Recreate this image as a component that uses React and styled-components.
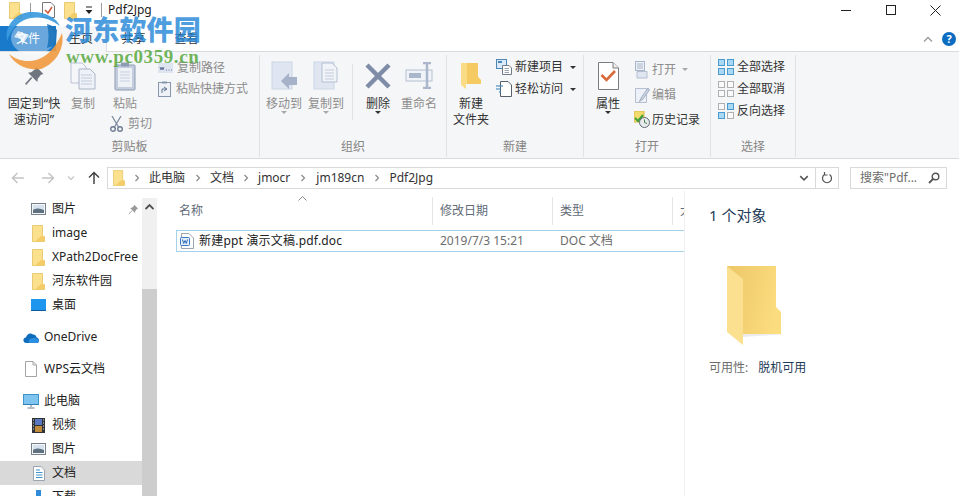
import styled, { createGlobalStyle } from "styled-components";

const GlobalStyle = createGlobalStyle`
  html, body {
    margin: 0;
    padding: 0;
    background: #fff;
  }
  * {
    box-sizing: border-box;
  }
`;

const Page = styled.div`
  position: relative;
  display: flex;
  flex-direction: column;
  width: 959px;
  height: 496px;
  overflow: hidden;
  background: #fff;
  color: #333;
  font-family: "Noto Sans", "Noto Sans CJK SC", sans-serif;
  font-size: 12px;
  line-height: 16px;
  svg {
    display: block;
    flex: none;
  }
`;

const TitleBar = styled.header`
  display: flex;
  align-items: center;
  height: 26px;
  padding: 0 0 6px 9px;
`;
const TitleIcons = styled.div`
  display: flex;
  align-items: center;
  width: 99px;
  height: 20px;
`;
const QuickSep = styled.span`
  width: 1px;
  height: 14px;
  background: #9a9a9a;
  margin: ${(p) => p.$m};
`;
const QuickGap = styled.span`
  width: ${(p) => p.$w}px;
`;
const TitleText = styled.span`
  flex: 1;
  color: #222;
`;
const WinButtons = styled.div`
  display: flex;
  width: 136px;
`;
const WinButton = styled.div`
  display: flex;
  align-items: center;
  justify-content: center;
  width: 45px;
  height: 20px;
`;

const TabRow = styled.nav`
  display: flex;
  align-items: stretch;
  height: 26px;
  border-bottom: 1px solid #dadbdc;
`;
const FileTab = styled.div`
  display: flex;
  align-items: center;
  justify-content: center;
  width: 56px;
  height: 25px;
  background: #1979ca;
  color: #fff;
`;
const Tab = styled.div`
  display: flex;
  align-items: center;
  justify-content: center;
  width: ${(p) => p.$w}px;
  height: ${(p) => (p.$active ? 26 : 25)}px;
  color: #333;
  background: ${(p) => (p.$active ? "#f5f6f7" : "#fff")};
  border-right: ${(p) => (p.$active ? "1px solid #dadbdc" : "0")};
`;
const TabEnd = styled.div`
  display: flex;
  align-items: center;
  justify-content: flex-end;
  gap: 9px;
  flex: 1;
  padding-right: 3px;
`;
const HelpDot = styled.span`
  display: flex;
  align-items: center;
  justify-content: center;
  width: 14px;
  height: 14px;
  border-radius: 50%;
  background: #0b6cc2;
  color: #fff;
  font-size: 11px;
  font-weight: 700;
`;

const Ribbon = styled.section`
  display: flex;
  height: 107px;
  background: #f5f6f7;
  border-bottom: 1px solid #dadbdc;
  padding-top: 3px;
`;
const Group = styled.div`
  display: flex;
  flex-direction: column;
  width: ${(p) => p.$w}px;
  margin-bottom: 1px;
  border-right: 1px solid #e1e2e3;
`;
const GroupBody = styled.div`
  display: flex;
  flex: 1;
  padding-left: ${(p) => p.$pl || 0}px;
`;
const GroupLabel = styled.div`
  height: 20px;
  line-height: 20px;
  text-align: center;
  color: #858585;
`;
const BigButton = styled.div`
  display: flex;
  flex-direction: column;
  align-items: center;
  width: ${(p) => p.$w}px;
  color: ${(p) => (p.$off ? "#8d8d8d" : "#333")};
  text-align: center;
`;
const BigIcon = styled.div`
  display: flex;
  align-items: center;
  justify-content: center;
  height: 41px;
  padding-top: ${(p) => p.$pt || 0}px;
`;
const DropMark = styled.span`
  width: 0;
  height: 0;
  margin-top: -1px;
  border: 3px solid transparent;
  border-bottom-width: 0;
  border-top: 3px solid ${(p) => (p.$off ? "#a8a8a8" : "#333")};
`;
const SmallColumn = styled.div`
  display: flex;
  flex-direction: column;
  margin-top: ${(p) => p.$mt || 0}px;
  margin-left: ${(p) => p.$ml || 0}px;
`;
const SmallRow = styled.div`
  display: flex;
  align-items: center;
  gap: ${(p) => p.$gap ?? 3}px;
  height: ${(p) => p.$h}px;
  color: ${(p) => (p.$off ? "#8d8d8d" : "#333")};
  white-space: nowrap;
`;
const CutRow = styled(SmallRow)`
  align-self: flex-start;
  margin: 4px 0 0 7px;
`;
const InnerSep = styled.span`
  width: 1px;
  height: 56px;
  margin: 9px 4px 0 6px;
  background: #e1e2e3;
`;
const Caret = styled.span`
  width: 0;
  height: 0;
  margin-left: 4px;
  border: 3px solid transparent;
  border-bottom-width: 0;
  border-top: 3px solid ${(p) => (p.$off ? "#a8a8a8" : "#333")};
`;

const NavBar = styled.div`
  display: flex;
  align-items: flex-start;
  height: 32px;
  padding-top: 8px;
`;
const NavArrows = styled.div`
  display: flex;
  align-items: center;
  width: 107px;
  height: 22px;
  padding-left: 11px;
`;
const NavSlot = styled.span`
  display: flex;
  justify-content: center;
  width: ${(p) => p.$w}px;
`;
const AddressBar = styled.div`
  display: flex;
  align-items: center;
  width: 732px;
  height: 22px;
  border: 1px solid #d9d9d9;
  padding-left: 5px;
`;
const Crumb = styled.span`
  color: #333;
  white-space: nowrap;
`;
const CrumbGap = styled.span`
  display: flex;
  justify-content: center;
  width: ${(p) => p.$w}px;
`;
const AddressEnd = styled.div`
  display: flex;
  align-items: center;
  justify-content: center;
  width: 23px;
  height: 20px;
  border-left: ${(p) => (p.$line ? "1px solid #d9d9d9" : "0")};
`;
const Spacer = styled.span`
  flex: 1;
`;
const SearchBox = styled.div`
  display: flex;
  align-items: center;
  justify-content: space-between;
  width: 97px;
  height: 22px;
  margin-left: 11px;
  padding: 0 6px 0 9px;
  border: 1px solid #d9d9d9;
  color: #6d6d6d;
`;

const Main = styled.main`
  display: flex;
  flex: 1;
  min-height: 0;
`;
const Sidebar = styled.aside`
  width: 142px;
  padding-top: 6px;
`;
const NavItem = styled.div`
  display: flex;
  align-items: center;
  gap: 6px;
  height: 24px;
  margin-bottom: ${(p) => p.$after || 0}px;
  padding-left: ${(p) => (p.$top ? 23 : 31)}px;
  background: ${(p) => (p.$selected ? "#d9d9d9" : "transparent")};
  color: #222;
  white-space: nowrap;
`;
const NavIconBox = styled.span`
  display: flex;
  justify-content: center;
  width: 15px;
`;
const PinMark = styled.span`
  margin-left: auto;
  margin-right: 3px;
`;
const ScrollBar = styled.div`
  display: flex;
  flex-direction: column;
  width: 15px;
  margin-top: 7px;
  background: #f0f0f0;
`;
const ScrollArrow = styled.div`
  display: flex;
  align-items: center;
  justify-content: center;
  height: 18px;
`;
const ScrollThumb = styled.div`
  flex: 1;
  margin-top: 73px;
  background: #cdcdcd;
`;
const FileList = styled.section`
  position: relative;
  width: 527px;
  padding-left: 15px;
  overflow: hidden;
`;
const HeaderRow = styled.div`
  display: flex;
  height: 28px;
  margin-top: 6px;
`;
const HeaderCell = styled.div`
  width: ${(p) => p.$w}px;
  flex: none;
  padding: 6px 0 0 7px;
  color: #5f6b78;
  border-right: 1px solid #e5e5e5;
  white-space: nowrap;
`;
const LastHeader = styled(HeaderCell)`
  border-right: 0;
`;
const SortMark = styled.div`
  position: absolute;
  left: 141px;
  top: 5px;
`;
const FileRow = styled.div`
  display: flex;
  align-items: center;
  height: 22px;
  margin: 5px 0 0 4px;
  border: 1px solid #a3d2ea;
  border-right: 0;
`;
const NameCell = styled.div`
  display: flex;
  align-items: center;
  gap: 5px;
  width: 256px;
  padding-left: 3px;
  color: #222;
  letter-spacing: 0.2px;
  white-space: nowrap;
`;
const MetaCell = styled.div`
  width: ${(p) => p.$w}px;
  padding-left: 7px;
  color: #6d6d6d;
  white-space: nowrap;
`;
const Details = styled.aside`
  flex: 1;
  padding: 13px 0 0 24px;
  border-left: 1px solid #f0f0f0;
`;
const DetailTitle = styled.div`
  font-size: 15px;
  line-height: 22px;
  color: #1f3b57;
`;
const DetailArt = styled.div`
  margin: 39px 0 0 16px;
`;
const DetailMeta = styled.div`
  display: flex;
  gap: 10px;
  margin-top: 13px;
  color: #6d6d6d;
`;
const DetailValue = styled.span`
  color: #1f3b57;
`;

const Watermark = styled.div`
  position: absolute;
  left: 0;
  top: 0;
  width: 210px;
  height: 75px;
  pointer-events: none;
`;
const WatermarkLogo = styled.div`
  position: absolute;
  left: 5px;
  top: 11px;
`;
const WatermarkName = styled.div`
  position: absolute;
  left: 65px;
  top: 11px;
  font-family: "Noto Sans CJK SC", sans-serif;
  font-size: 27px;
  line-height: 36px;
  font-weight: 900;
  letter-spacing: 0.2px;
  color: rgba(38, 136, 216, 0.82);
  white-space: nowrap;
`;
const WatermarkUrl = styled.div`
  position: absolute;
  left: 66px;
  top: 47px;
  font-family: "Liberation Serif", serif;
  font-size: 19px;
  line-height: 20px;
  font-weight: 700;
  letter-spacing: 0.6px;
  color: rgba(88, 168, 62, 0.85);
  white-space: nowrap;
`;

const FolderSmall = ({ w = 13, h = 17 }) => (
  <svg width={w} height={h} viewBox="0 0 13 17">
    <path d="M0.500 0.500H10.500V12H12.500V16.500H0.500Z" fill="#fbe08e" stroke="#eacb73" />
    <path d="M9 11H12.500V16.500H3Z" fill="#f4cc68" />
  </svg>
);

const Pin = ({ size = 21, color = "#6f7680" }) => (
  <svg width={size} height={size} viewBox="0 0 26 26">
    <path d="M15 2L24 11L21 12L17 17L16.500 21L5 9.500L9 9L14 5Z" fill={color} />
    <path d="M9.500 15.500L2 24" stroke={color} strokeWidth="2" />
  </svg>
);

const PagesIcon = () => (
  <svg width="26" height="28" viewBox="0 0 26 28">
    <path d="M1 1H12L16 5V21H1Z" fill="#f4f6fa" stroke="#b9c3d4" />
    <path d="M9 7H20L25 12V27H9Z" fill="#eef1f7" stroke="#aab5c8" />
    <path d="M11 13H22M11 16H22M11 19H22M11 22H22" stroke="#c3ccdb" />
  </svg>
);

const PasteIcon = () => (
  <svg width="22" height="29" viewBox="0 0 22 29">
    <rect x="1" y="3" width="20" height="25" rx="1" fill="#c3cddd" stroke="#8e9bb2" />
    <rect x="4" y="6" width="14" height="19" fill="#eef1f6" />
    <path d="M6 10H16M6 13H16M6 16H16M6 19H16" stroke="#c9d1de" />
    <rect x="7" y="0.500" width="8" height="4" fill="#8e9bb2" />
  </svg>
);

const MoveIcon = ({ second }) => (
  <svg width="27" height="30" viewBox="0 0 27 30">
    <rect x="1" y="1" width="20" height="27" fill="#dfe6f2" stroke="#ccd6e6" />
    {second ? (
      <>
        <path d="M9 2H19L24 7V21H9Z" fill="#f0f3f8" stroke="#b5c0d2" />
        <path d="M12 9H21M12 12H21M12 15H21M12 18H21" stroke="#c3ccdb" />
      </>
    ) : (
      <path d="M10 20L18 12V16H26V24H18V28Z" fill="#a6b2c8" />
    )}
  </svg>
);

const DeleteIcon = () => (
  <svg width="26" height="26" viewBox="0 0 26 26">
    <path d="M2 2L24 24M24 2L2 24" stroke="#7e8ca8" strokeWidth="4.500" />
  </svg>
);

const RenameIcon = () => (
  <svg width="29" height="27" viewBox="0 0 29 27">
    <rect x="1" y="8" width="26" height="11" fill="#f0f3f8" stroke="#b3bfd2" />
    <rect x="4" y="11" width="12" height="5" fill="#a9b6cb" />
    <path d="M18 1H26M22 1V26M18 26H26" stroke="#a9b6cb" strokeWidth="2.500" />
  </svg>
);

const FolderOpen = () => (
  <svg width="20" height="28" viewBox="0 0 20 28">
    <path d="M0 1H17V15L20 18V22H5V27L0 23Z" fill="#fbdc86" />
    <path d="M6 1H17V15L20 18V22H6Z" fill="#f6ca62" />
  </svg>
);

const NewItemIcon = () => (
  <svg width="16" height="16" viewBox="0 0 16 16">
    <rect x="0.500" y="0.500" width="10" height="9" fill="#dbeaf8" stroke="#4b87b8" />
    <rect x="2" y="2" width="4" height="2" fill="#4b87b8" />
    <path d="M6.500 6.500H13L15.500 9V15.500H6.500Z" fill="#fff" stroke="#6f7c8a" />
    <path d="M8.500 9.500H13M8.500 11.500H13M8.500 13.500H13" stroke="#9aa5b1" />
  </svg>
);

const EasyAccessIcon = () => (
  <svg width="16" height="16" viewBox="0 0 16 16">
    <path d="M4.500 0.500H12L15.500 4V15.500H4.500Z" fill="#fff" stroke="#56616d" />
    <path d="M0 5H7M0 8H5M3 11H5" stroke="#2f7fb5" strokeWidth="1.200" />
  </svg>
);

const PropsIcon = () => (
  <svg width="21" height="28" viewBox="0 0 21 28">
    <path d="M0.500 0.500H15L20.500 6V27.500H0.500Z" fill="#fff" stroke="#7c7c7c" />
    <path d="M15 0.500V6H20.500" fill="#eee" stroke="#7c7c7c" />
    <path d="M3.500 13L8.500 18L17 9" fill="none" stroke="#d9693a" strokeWidth="2.600" />
  </svg>
);

const OpenIcon = () => (
  <svg width="16" height="18" viewBox="0 0 16 18">
    <rect x="1.500" y="0.500" width="9" height="9" fill="#eef1f7" stroke="#a9b5c8" />
    <path d="M3 3H9M3 5H9M3 7H9" stroke="#a9b5c8" />
    <path d="M3 10.500H13V17H3Z" fill="#dfe6f2" stroke="#b4bfd1" />
  </svg>
);

const EditIcon = () => (
  <svg width="16" height="18" viewBox="0 0 16 18">
    <path d="M1.500 2.500H12.500V16.500H1.500Z" fill="#eef2f8" stroke="#b4bfd1" />
    <path d="M14 2L7 12L5.500 15.500L9 13L15.500 4Z" fill="#c9d3e2" stroke="#a3afc3" />
  </svg>
);

const HistoryIcon = () => (
  <svg width="16" height="17" viewBox="0 0 16 17">
    <rect x="0" y="0" width="10" height="11" fill="#f4da6c" stroke="#d8b84a" />
    <path d="M1 7L4 10L9 4" fill="none" stroke="#3ea33a" strokeWidth="2" />
    <circle cx="10.500" cy="11.500" r="5" fill="#e8eaed" stroke="#5d6a72" />
    <path d="M10.500 8.500V11.500L13 12.500" fill="none" stroke="#41814a" />
  </svg>
);

const GridIcon = ({ pattern }) => {
  const cells = [
    [0, 0],
    [9, 0],
    [0, 9],
    [9, 9],
  ];
  return (
    <svg width="16" height="16" viewBox="0 0 16 16">
      {cells.map(([x, y], i) => (
        <rect
          key={i}
          x={x + 0.5}
          y={y + 0.5}
          width="6"
          height="6"
          fill={pattern[i] ? "#a9d8f5" : "#fafafa"}
          stroke={pattern[i] ? "#4a9ad0" : "#b0b0b0"}
        />
      ))}
    </svg>
  );
};

const CutIcon = () => (
  <svg width="13" height="16" viewBox="0 0 13 16">
    <path d="M2 0L8.500 11M11 0L4.500 11" stroke="#7f8b9f" strokeWidth="1.300" />
    <circle cx="3" cy="13" r="2.300" fill="none" stroke="#6f7c92" strokeWidth="1.400" />
    <circle cx="10" cy="13" r="2.300" fill="none" stroke="#6f7c92" strokeWidth="1.400" />
  </svg>
);

const CopyPathIcon = () => (
  <svg width="15" height="10" viewBox="0 0 15 10">
    <rect x="0" y="0" width="15" height="10" fill="#dfe5f0" />
    <path d="M2 4L3 7L4 4L5 7L6 4M8 7H9M10.500 7H11.500M13 7H14" fill="none" stroke="#6878a0" />
  </svg>
);

const ShortcutIcon = () => (
  <svg width="13" height="16" viewBox="0 0 13 16">
    <rect x="0.500" y="1.500" width="12" height="14" fill="#eef1f6" stroke="#8997ae" />
    <rect x="4" y="0.500" width="5" height="2" fill="#8997ae" />
    <path d="M4 12V8H8M6 6L9 8L6 10" fill="none" stroke="#5f7396" />
  </svg>
);

const Chevron = ({ color = "#8a8a8a", size = 8, rotate = 0 }) => (
  <svg width={size} height={size} viewBox="0 0 8 8" style={{ transform: `rotate(${rotate}deg)` }}>
    <path d="M2.500 1L5.500 4L2.500 7" fill="none" stroke={color} strokeWidth="1.200" />
  </svg>
);

const ArrowIcon = ({ color, rotate = 0 }) => (
  <svg width="14" height="14" viewBox="0 0 14 14" style={{ transform: `rotate(${rotate}deg)` }}>
    <path d="M1.500 7H13M6.500 2L1.500 7L6.500 12" fill="none" stroke={color} strokeWidth="1.500" />
  </svg>
);

const ScreenPic = () => (
  <svg width="15" height="12" viewBox="0 0 15 12">
    <rect x="0.500" y="0.500" width="14" height="11" fill="#f4f6f8" stroke="#77818c" />
    <rect x="2" y="2" width="11" height="8" fill="#d6e2ee" />
    <path d="M2 7C5 5 9 5 13 7V10H2Z" fill="#5f7080" />
  </svg>
);

const DesktopIcon = () => (
  <svg width="15" height="12" viewBox="0 0 15 12">
    <rect x="0" y="0" width="15" height="11" fill="#1e96ee" />
    <rect x="0" y="11" width="15" height="1" fill="#0b5b9e" />
  </svg>
);

const CloudIcon = () => (
  <svg width="16" height="11" viewBox="0 0 16 11">
    <path d="M3.500 11C1 11 0 9 0.500 7.500C1 6 2 5.500 3 5.500C3.500 2 7.500 0 10 2.500C12.500 2.500 13.500 4 13.500 5.500C15 5.500 16 7 16 8.500C16 10 15 11 13.500 11Z" fill="#0f6cbd" />
    <path d="M6 11C5 9 6 6.500 9 6.500C11 5 14 6 14.500 7.500C16 8 16 10 15 11Z" fill="#2a8fe0" />
  </svg>
);

const BlankDoc = () => (
  <svg width="12" height="16" viewBox="0 0 12 16">
    <path d="M0.500 0.500H8L11.500 4V15.500H0.500Z" fill="#fff" stroke="#a4a4a4" />
    <path d="M8 0.500V4H11.500" fill="none" stroke="#a4a4a4" />
  </svg>
);

const PcIcon = () => (
  <svg width="16" height="15" viewBox="0 0 16 15">
    <rect x="0.500" y="0.500" width="15" height="10" fill="#7fc4ee" stroke="#3f94cc" />
    <rect x="0" y="10" width="16" height="1" fill="#2f7fb5" />
    <path d="M8 11V13M4.500 14H11.500" stroke="#6f7f8c" />
  </svg>
);

const VideoIcon = () => (
  <svg width="13" height="15" viewBox="0 0 13 15">
    <rect x="0" y="0" width="13" height="15" fill="#2f3338" />
    <rect x="3" y="1" width="7" height="6" fill="#5a78c2" />
    <rect x="3" y="8" width="7" height="6" fill="#c08a3c" />
    <path d="M1 2H2M1 5H2M1 8H2M1 11H2M11 2H12M11 5H12M11 8H12M11 11H12" stroke="#ddd" />
  </svg>
);

const DocsIcon = () => (
  <svg width="12" height="15" viewBox="0 0 12 15">
    <path d="M0.500 0.500H8L11.500 4V14.500H0.500Z" fill="#fff" stroke="#9aa5b1" />
    <path d="M3 4H7M3 6.500H9.500M3 9H9.500M3 11.500H9.500" stroke="#3f94cc" />
  </svg>
);

const DownloadIcon = () => (
  <svg width="11" height="15" viewBox="0 0 11 15">
    <path d="M3 0H8V6H11L5.500 12L0 6H3Z" fill="#2f8ad8" />
  </svg>
);

const WordDoc = () => (
  <svg width="14" height="16" viewBox="0 0 14 16">
    <path d="M1.500 0.500H9L13.500 5V15.500H1.500Z" fill="#fff" stroke="#9aa5b1" />
    <rect x="0.500" y="4.500" width="9" height="8" rx="1" fill="#e4eefb" stroke="#3b78c2" />
    <path d="M2.500 6.500L3.700 10.500L5 7.500L6.300 10.500L7.500 6.500" fill="none" stroke="#2f6cb8" />
  </svg>
);

const BigFolder = () => (
  <svg width="58" height="82" viewBox="0 0 58 82">
    <defs>
      <linearGradient id="backFold" x1="0" y1="0" x2="1" y2="0.300">
        <stop offset="0" stopColor="#ecc768" />
        <stop offset="1" stopColor="#fbdc7e" />
      </linearGradient>
    </defs>
    <path d="M2 1H51V42L56 47V69H18V80Z" fill="url(#backFold)" />
    <path d="M2 1L18 14V80L2 67Z" fill="#fbe08f" />
    <path d="M18 69H56L60 69L18 72Z" fill="#ececec" />
  </svg>
);

const Logo = () => (
  <svg width="60" height="60" viewBox="0 0 60 60">
    <ellipse cx="28" cy="27" rx="22" ry="17" fill="#fff" opacity="0.35" />
    <path d="M2 30C-1 12 14 0 28 1C42 1 52 8 55 15C46 8 36 5 26 7C14 9 6 18 2 30Z" fill="#3b9ade" opacity="0.92" />
    <path d="M42 13C46 14 50 16 52 19L51 33C48 35 45 36 42 37C44 29 44 21 42 13Z" fill="#1c74bd" opacity="0.9" />
    <path d="M13 20L24 24L17 34L16 28L9 26Z" fill="#fff" opacity="0.75" />
    <path d="M4 43C12 50 24 52 34 48C44 44 52 34 57 22C60 36 52 52 36 58C22 60 10 54 4 43Z" fill="#f29a3e" opacity="0.9" />
  </svg>
);

export default function App() {
  return (
    <Page>
      <GlobalStyle />
      <TitleBar>
        <TitleIcons>
          <FolderSmall />
          <QuickSep $m="0 11px 0 8px" />
          <svg width="13" height="16" viewBox="0 0 13 16">
            <path d="M0.500 0.500H9L12.500 4V15.500H0.500Z" fill="#fff" stroke="#777" />
            <path d="M3 8L6 11L10 5" fill="none" stroke="#d2563a" strokeWidth="1.500" />
          </svg>
          <QuickGap $w={9} />
          <FolderSmall />
          <QuickGap $w={8} />
          <svg width="8" height="9" viewBox="0 0 8 9">
            <path d="M1 1H7" stroke="#222" />
            <path d="M0.500 4H7.500L4 8Z" fill="#222" />
          </svg>
          <QuickSep $m="0 0 0 8px" />
        </TitleIcons>
        <TitleText>Pdf2Jpg</TitleText>
        <WinButtons>
          <WinButton>
            <svg width="10" height="10" viewBox="0 0 10 10">
              <path d="M0 5.500H10" stroke="#222" />
            </svg>
          </WinButton>
          <WinButton>
            <svg width="10" height="10" viewBox="0 0 10 10">
              <rect x="0.500" y="0.500" width="9" height="9" fill="none" stroke="#222" />
            </svg>
          </WinButton>
          <WinButton>
            <svg width="11" height="11" viewBox="0 0 11 11">
              <path d="M0.500 0.500L10.500 10.500M10.500 0.500L0.500 10.500" stroke="#222" />
            </svg>
          </WinButton>
        </WinButtons>
      </TitleBar>

      <TabRow>
        <FileTab>文件</FileTab>
        <Tab $w={51} $active>主页</Tab>
        <Tab $w={53}>共享</Tab>
        <Tab $w={53}>查看</Tab>
        <TabEnd>
          <svg width="10" height="6" viewBox="0 0 10 6">
            <path d="M1 5.500L5 1.500L9 5.500" fill="none" stroke="#9a9a9a" strokeWidth="1.300" />
          </svg>
          <HelpDot>?</HelpDot>
        </TabEnd>
      </TabRow>

      <Ribbon>
        <Group $w={260}>
          <GroupBody $pl={5}>
            <BigButton $w={58}>
              <BigIcon><Pin /></BigIcon>
              <span>固定到“快速访问”</span>
            </BigButton>
            <BigButton $w={40} $off>
              <BigIcon><PagesIcon /></BigIcon>
              <span>复制</span>
            </BigButton>
            <BigButton $w={44} $off>
              <BigIcon $pt={1}><PasteIcon /></BigIcon>
              <span>粘贴</span>
              <CutRow $h={16} $off $gap={5}>
                <CutIcon />
                剪切
              </CutRow>
            </BigButton>
            <SmallColumn $mt={2} $ml={11}>
              <SmallRow $h={21} $off $gap={4}>
                <CopyPathIcon />
                复制路径
              </SmallRow>
              <SmallRow $h={21} $off $gap={5}>
                <ShortcutIcon />
                粘贴快捷方式
              </SmallRow>
            </SmallColumn>
          </GroupBody>
          <GroupLabel>剪贴板</GroupLabel>
        </Group>

        <Group $w={187}>
          <GroupBody $pl={2}>
            <BigButton $w={44} $off>
              <BigIcon><MoveIcon /></BigIcon>
              <span>移动到</span>
              <DropMark $off />
            </BigButton>
            <BigButton $w={40} $off>
              <BigIcon><MoveIcon second /></BigIcon>
              <span>复制到</span>
              <DropMark $off />
            </BigButton>
            <InnerSep />
            <BigButton $w={42}>
              <BigIcon><DeleteIcon /></BigIcon>
              <span>删除</span>
              <DropMark />
            </BigButton>
            <BigButton $w={40} $off>
              <BigIcon><RenameIcon /></BigIcon>
              <span>重命名</span>
            </BigButton>
          </GroupBody>
          <GroupLabel>组织</GroupLabel>
        </Group>

        <Group $w={137}>
          <GroupBody $pl={3}>
            <BigButton $w={42}>
              <BigIcon $pt={1}><FolderOpen /></BigIcon>
              <span>新建<br />文件夹</span>
            </BigButton>
            <SmallColumn $mt={1} $ml={4}>
              <SmallRow $h={22}>
                <NewItemIcon />
                新建项目
                <Caret />
              </SmallRow>
              <SmallRow $h={22}>
                <EasyAccessIcon />
                轻松访问
                <Caret />
              </SmallRow>
            </SmallColumn>
          </GroupBody>
          <GroupLabel>新建</GroupLabel>
        </Group>

        <Group $w={127}>
          <GroupBody $pl={4}>
            <BigButton $w={40}>
              <BigIcon><PropsIcon /></BigIcon>
              <span>属性</span>
              <DropMark />
            </BigButton>
            <SmallColumn $mt={2} $ml={6}>
              <SmallRow $h={25} $off $gap={2}>
                <OpenIcon />
                打开
                <Caret $off />
              </SmallRow>
              <SmallRow $h={25} $off $gap={2}>
                <EditIcon />
                编辑
              </SmallRow>
              <SmallRow $h={25} $gap={2}>
                <HistoryIcon />
                历史记录
              </SmallRow>
            </SmallColumn>
          </GroupBody>
          <GroupLabel>打开</GroupLabel>
        </Group>

        <Group $w={85}>
          <GroupBody $pl={7}>
            <SmallColumn $mt={1}>
              <SmallRow $h={22}>
                <GridIcon pattern={[1, 1, 1, 1]} />
                全部选择
              </SmallRow>
              <SmallRow $h={22}>
                <GridIcon pattern={[0, 0, 0, 0]} />
                全部取消
              </SmallRow>
              <SmallRow $h={22}>
                <GridIcon pattern={[0, 1, 1, 0]} />
                反向选择
              </SmallRow>
            </SmallColumn>
          </GroupBody>
          <GroupLabel>选择</GroupLabel>
        </Group>
      </Ribbon>

      <NavBar>
        <NavArrows>
          <NavSlot $w={14}><ArrowIcon color="#c4c4c4" /></NavSlot>
          <NavSlot $w={16} />
          <NavSlot $w={14}><ArrowIcon color="#c4c4c4" rotate={180} /></NavSlot>
          <NavSlot $w={32}><Chevron color="#c4c4c4" rotate={90} /></NavSlot>
          <NavSlot $w={14}><ArrowIcon color="#444" rotate={90} /></NavSlot>
        </NavArrows>
        <AddressBar>
          <FolderSmall w={12} h={16} />
          <CrumbGap $w={24}><Chevron /></CrumbGap>
          <Crumb>此电脑</Crumb>
          <CrumbGap $w={25}><Chevron /></CrumbGap>
          <Crumb>文档</Crumb>
          <CrumbGap $w={24}><Chevron /></CrumbGap>
          <Crumb>jmocr</Crumb>
          <CrumbGap $w={26}><Chevron /></CrumbGap>
          <Crumb>jm189cn</Crumb>
          <CrumbGap $w={25}><Chevron /></CrumbGap>
          <Crumb>Pdf2Jpg</Crumb>
          <Spacer />
          <AddressEnd>
            <Chevron color="#555" size={10} rotate={90} />
          </AddressEnd>
          <AddressEnd $line>
            <svg width="12" height="12" viewBox="0 0 12 12">
              <path d="M8.500 2.500A4.500 4.500 0 1 1 3.500 2.500M3.500 0V3H6.500" fill="none" stroke="#555" strokeWidth="1.200" />
            </svg>
          </AddressEnd>
        </AddressBar>
        <SearchBox>
          搜索"Pdf...
          <svg width="12" height="12" viewBox="0 0 12 12">
            <circle cx="7.500" cy="4.500" r="3.300" fill="none" stroke="#555" strokeWidth="1.400" />
            <path d="M5 7L1 11" stroke="#555" strokeWidth="1.800" />
          </svg>
        </SearchBox>
      </NavBar>

      <Main>
        <Sidebar>
          <NavItem>
            <NavIconBox><ScreenPic /></NavIconBox>图片
            <PinMark><Pin size={11} color="#9a9a9a" /></PinMark>
          </NavItem>
          <NavItem><NavIconBox><FolderSmall /></NavIconBox>image</NavItem>
          <NavItem><NavIconBox><FolderSmall /></NavIconBox>XPath2DocFree</NavItem>
          <NavItem><NavIconBox><FolderSmall /></NavIconBox>河东软件园</NavItem>
          <NavItem $after={8}><NavIconBox><DesktopIcon /></NavIconBox>桌面</NavItem>
          <NavItem $top $after={8}><NavIconBox><CloudIcon /></NavIconBox>OneDrive</NavItem>
          <NavItem $top $after={8}><NavIconBox><BlankDoc /></NavIconBox>WPS云文档</NavItem>
          <NavItem $top><NavIconBox><PcIcon /></NavIconBox>此电脑</NavItem>
          <NavItem><NavIconBox><VideoIcon /></NavIconBox>视频</NavItem>
          <NavItem><NavIconBox><ScreenPic /></NavIconBox>图片</NavItem>
          <NavItem $selected><NavIconBox><DocsIcon /></NavIconBox>文档</NavItem>
          <NavItem><NavIconBox><DownloadIcon /></NavIconBox>下载</NavItem>
        </Sidebar>
        <ScrollBar>
          <ScrollArrow>
            <svg width="9" height="6" viewBox="0 0 9 6">
              <path d="M0.500 5L4.500 1L8.500 5" fill="none" stroke="#505050" strokeWidth="1.800" />
            </svg>
          </ScrollArrow>
          <ScrollThumb />
        </ScrollBar>
        <FileList>
          <SortMark>
            <svg width="9" height="5" viewBox="0 0 9 5">
              <path d="M0.500 4.500L4.500 0.500L8.500 4.500" fill="none" stroke="#8a8a8a" />
            </svg>
          </SortMark>
          <HeaderRow>
            <HeaderCell $w={261}>名称</HeaderCell>
            <HeaderCell $w={120}>修改日期</HeaderCell>
            <HeaderCell $w={120}>类型</HeaderCell>
            <LastHeader $w={40}>大小</LastHeader>
          </HeaderRow>
          <FileRow>
            <NameCell>
              <WordDoc />
              新建ppt 演示文稿.pdf.doc
            </NameCell>
            <MetaCell $w={120}>2019/7/3 15:21</MetaCell>
            <MetaCell $w={120}>DOC 文档</MetaCell>
          </FileRow>
        </FileList>
        <Details>
          <DetailTitle>1 个对象</DetailTitle>
          <DetailArt><BigFolder /></DetailArt>
          <DetailMeta>
            可用性:
            <DetailValue>脱机可用</DetailValue>
          </DetailMeta>
        </Details>
      </Main>

      <Watermark>
        <WatermarkLogo><Logo /></WatermarkLogo>
        <WatermarkName>河东软件园</WatermarkName>
        <WatermarkUrl>www.pc0359.cn</WatermarkUrl>
      </Watermark>
    </Page>
  );
}
